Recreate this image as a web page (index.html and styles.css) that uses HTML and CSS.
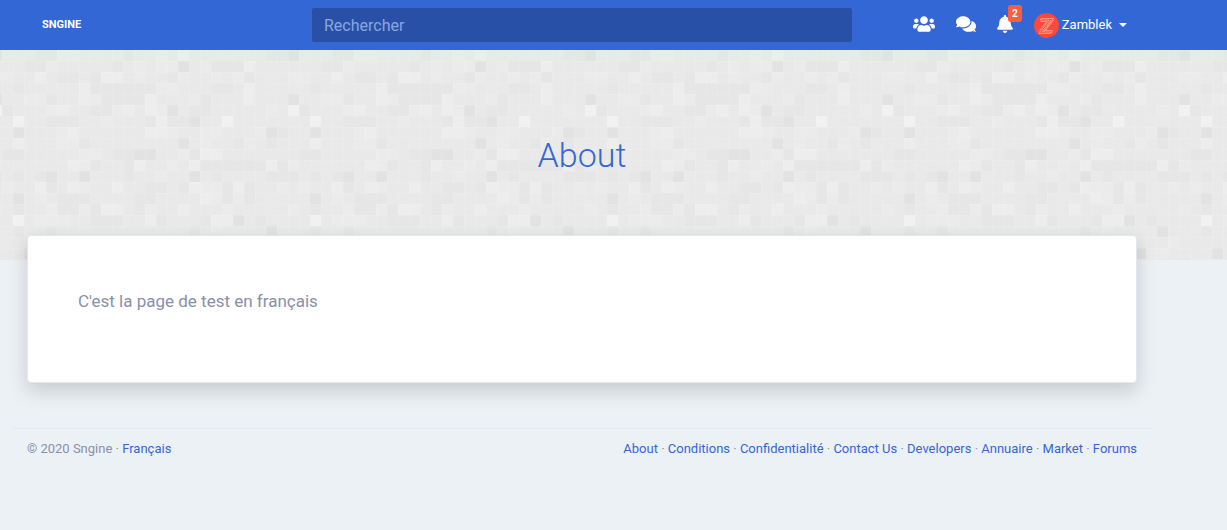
FILE: index.html
```
<!DOCTYPE html>
<html lang="fr">

<head>
    <meta charset="UTF-8" />
    <meta name="viewport" content="width=device-width, initial-scale=1.0" />
    <title>About | Sngine</title>
    <link rel="stylesheet" href="styles.css">
</head>

<body>
    <!-- Header -->
    <header class="main-header">
        <div class="container header-row">
            <div class="header-brand">
                <a class="logo" href="#">SNGINE</a>
            </div>
            <form class="header-search">
                <input type="text" placeholder="Rechercher" aria-label="Rechercher" />
            </form>
            <nav class="header-nav">
                <a class="nav-icon" href="#" aria-label="Friends">
                    <svg width="22" height="18" viewBox="0 0 640 512">
                        <path d="M96 224c35.3 0 64-28.7 64-64s-28.7-64-64-64-64 28.7-64 64 28.7 64 64 64zm448 0c35.3 0 64-28.7 64-64s-28.7-64-64-64-64 28.7-64 64 28.7 64 64 64zm32 32h-64c-17.6 0-33.5 7.1-45.1 18.6 40.3 22.1 68.9 62 75.1 109.4h66c17.7 0 32-14.3 32-32v-32c0-35.3-28.7-64-64-64zm-256 0c61.9 0 112-50.1 112-112S381.9 32 320 32 208 82.1 208 144s50.1 112 112 112zm76.8 32h-8.3c-20.8 10-43.9 16-68.5 16s-47.6-6-68.5-16h-8.3C179.6 288 128 339.6 128 403.2V432c0 26.5 21.5 48 48 48h288c26.5 0 48-21.5 48-48v-28.8c0-63.6-51.6-115.2-115.2-115.2zm-223.7-13.4C161.5 263.1 145.6 256 128 256H64c-35.3 0-64 28.7-64 64v32c0 17.7 14.3 32 32 32h65.9c6.3-47.4 34.9-87.3 75.2-109.4z" />
                    </svg>
                </a>
                <a class="nav-icon" href="#" aria-label="Messages">
                    <svg width="20" height="18" viewBox="0 0 576 512">
                        <path d="M416 192c0-88.4-93.1-160-208-160S0 103.6 0 192c0 34.3 14.1 65.9 38 92-13.4 30.2-35.5 54.2-35.8 54.5-2.2 2.3-2.8 5.7-1.5 8.7S4.8 352 8 352c36.6 0 66.9-12.3 88.7-25 32.2 15.7 70.3 25 111.3 25 114.9 0 208-71.6 208-160zm122 220c23.9-26 38-57.7 38-92 0-66.9-53.5-124.2-129.3-148.1.9 6.6 1.3 13.3 1.3 20.1 0 105.9-107.7 192-240 192-10.8 0-21.3-.8-31.7-1.9C207.8 439.6 281.8 480 368 480c41 0 79.1-9.2 111.3-25 21.8 12.7 52.1 25 88.7 25 3.2 0 6.1-1.9 7.3-4.8 1.3-2.9.7-6.3-1.5-8.7-.3-.3-22.4-24.2-35.8-54.5z" />
                    </svg>
                </a>
                <a class="nav-icon" href="#" aria-label="Notifications">
                    <svg width="16" height="18" viewBox="0 0 448 512">
                        <path d="M224 512c35.32 0 63.97-28.65 63.97-64H160.03c0 35.35 28.65 64 63.97 64zm215.39-149.71c-19.32-20.76-55.47-51.99-55.47-154.29 0-77.7-54.48-139.9-127.94-155.16V32c0-17.67-14.32-32-31.98-32s-31.98 14.33-31.98 32v20.84C118.56 68.1 64.08 130.3 64.08 208c0 102.3-36.15 133.53-55.47 154.29-6 6.45-8.66 14.16-8.61 21.71.11 16.4 12.98 32 32.1 32h383.8c19.12 0 32-15.6 32.1-32 .05-7.55-2.61-15.27-8.61-21.71z" />
                    </svg>
                    <span class="badge">2</span>
                </a>
                <button class="user-menu" type="button">
                    <svg class="avatar" width="25" height="25" viewBox="0 0 25 25">
                        <circle cx="12.5" cy="12.5" r="12.5" fill="#fb4a3b" />
                        <g fill="none" stroke="#ffb3a6" stroke-width=".7" stroke-linejoin="round">
                            <path d="M7 5.5h12.500L9.500 19H17l-.8 1.500H5L15 7H6.300z" />
                            <path d="M6.500 8.500h6L5 18.500M12 17.500h6.500L17 20.500M19.500 7L11 18M17 7L7.300 20" />
                        </g>
                    </svg>
                    <span>Zamblek</span>
                    <span class="caret"></span>
                </button>
            </nav>
        </div>
    </header>

    <!-- Page Header -->
    <section class="page-header">
        <svg class="page-pattern" aria-hidden="true">
            <defs>
                <!-- one unit = one 11px square, the tile is 27 squares wide -->
                <pattern id="squares" width="27" height="19" patternUnits="userSpaceOnUse" patternTransform="translate(2 0) scale(11)">
                    <rect width="27" height="19" fill="#eaeaea" />
                    <path stroke="#ececec" d="M5 .5h2M14 .5h1M4 1.500h1M12 1.500h1M14 1.500h2M18 1.500h1M0 2.500h1M12 2.500h1M16 2.500h1M19 2.500h1M21 2.500h1M26 2.500h1M14 3.500h2M2 4.500h2M8 4.500h1M17 4.500h1M4 5.500h1M10 5.500h1M14 5.500h1M24 5.500h1M9 6.500h1M5 7.500h1M15 7.500h1M18 7.500h2M23 7.500h1M5 8.500h2M18 8.500h1M22 8.500h1M7 9.500h2M16 9.500h1M7 10.500h1M15 10.500h1M26 10.500h1M14 11.500h1M0 12.500h1M7 12.500h1M18 12.500h2M25 12.500h1M3 13.500h1M19 13.500h1M21 13.500h1M4 14.500h1M7 14.500h1M13 14.500h1M20 14.500h1M26 14.500h1M3 15.500h3M19 16.500h1M25 17.500h1M23 18.500h2" />
                    <path stroke="#eeeeee" d="M16 .5h1M22 1.500h1M3 2.500h1M9 2.500h2M7 3.500h1M22 3.500h1M7 4.500h1M13 4.500h1M22 4.500h1M5 5.500h1M11 5.500h1M13 5.500h1M14 6.500h1M6 7.500h1M13 7.500h2M1 8.500h1M18 9.500h2M6 10.500h1M12 10.500h1M17 10.500h1M24 10.500h1M3 12.500h1M6 12.500h1M10 12.500h1M17 12.500h1M21 12.500h1M18 13.500h1M9 14.500h2M16 14.500h1M13 15.500h1M19 15.500h2" />
                    <path stroke="#f2f2f2" d="M26 5.500h1M1 6.500h1M20 6.500h1M1 15.500h1" />
                    <path stroke="#e7e7e7" d="M3 .5h2M11 .5h1M24 .5h2M2 1.500h2M10 1.500h1M19 1.500h3M5 2.500h2M8 2.500h1M15 2.500h1M22 2.500h1M1 3.500h1M8 3.500h6M19 3.500h2M4 4.500h1M9 4.500h4M18 4.500h1M0 5.500h1M8 5.500h2M17 5.500h2M4 6.500h3M13 6.500h1M15 6.500h2M25 7.500h1M7 8.500h1M21 8.500h1M24 8.500h1M0 9.500h2M10 9.500h2M17 9.500h1M8 10.500h1M11 10.500h1M18 10.500h6M25 10.500h1M1 11.500h1M3 11.500h1M11 11.500h1M19 11.500h1M24 11.500h3M4 12.500h1M13 12.500h2M16 12.500h1M20 12.500h1M22 12.500h1M5 13.500h3M12 13.500h2M20 13.500h1M22 13.500h1M1 14.500h1M5 14.500h2M8 14.500h1M12 14.500h1M8 15.500h3M14 15.500h1M18 15.500h1M23 15.500h1M1 16.500h1M4 16.500h1M17 16.500h1" />
                    <path stroke="#e3e3e3" d="M26 .5h1M16 1.500h1M26 4.500h1M15 5.500h1M17 6.500h1M1 7.500h1M24 7.500h1M16 8.500h1M12 9.500h2M4 11.500h1M7 11.500h1M17 11.500h1M1 13.500h1M21 15.500h1M24 16.500h1M2 18.500h1M22 18.500h1" />
                </pattern>
                <pattern id="edges" width="11" height="11" patternUnits="userSpaceOnUse" patternTransform="translate(2 0)">
                    <path d="M0 .5h11M.5 0v11" stroke="#ffffff" stroke-opacity=".1" />
                </pattern>
                <filter id="grain">
                    <feTurbulence type="fractalNoise" baseFrequency=".7" numOctaves="2" />
                    <feColorMatrix type="saturate" values="0" />
                </filter>
            </defs>
            <rect width="100%" height="100%" fill="url(#squares)" />
            <rect width="100%" height="100%" fill="url(#edges)" />
            <rect width="100%" height="100%" filter="url(#grain)" opacity=".03" />
        </svg>
        <div class="container">
            <h1>About</h1>
        </div>
    </section>

    <!-- Page Content -->
    <main class="container page-content">
        <div class="card">
            <p>C'est la page de test en français</p>
        </div>
    </main>

    <!-- Footer -->
    <footer class="container footer">
        <div>&copy; 2020 Sngine · <a href="#">Français</a></div>
        <div class="footer-links">
            <a href="#">About</a> · <a href="#">Conditions</a> · <a href="#">Confidentialité</a> · <a href="#">Contact Us</a> · <a href="#">Developers</a> · <a href="#">Annuaire</a> · <a href="#">Market</a> · <a href="#">Forums</a>
        </div>
    </footer>
</body>

</html>
```
FILE: styles.css
```
* {
    box-sizing: border-box;
}

body {
    margin: 0;
    font-family: Roboto, "Liberation Sans", sans-serif;
    font-size: 13px;
    line-height: 20px;
    color: #8a8fa8;
    background: #ecf1f6;
}

a {
    color: #3367d6;
    text-decoration: none;
}

.container {
    max-width: 1140px;
    margin: 0 12px;
    padding: 0 15px;
}

/* Header */
.main-header {
    background: #3367d6;
}

.header-row {
    display: grid;
    grid-template-columns: 1fr 2fr 1fr;
    align-items: center;
    height: 50px;
    padding: 0;
}

.header-brand {
    padding: 0 30px 2px;
}

.logo {
    color: #ffffff;
    font-size: 11px;
    font-weight: 700;
}

.header-search {
    padding: 0 15px;
}

.header-search input {
    display: block;
    width: 100%;
    height: 34px;
    padding: 0 12px;
    border: none;
    border-radius: 2px;
    background: #2850a7;
    color: #ffffff;
    font-family: inherit;
    font-size: 16px;
}

.header-search input::placeholder {
    color: #8ba6df;
}

.header-nav {
    display: flex;
    align-items: center;
    justify-content: flex-end;
    gap: 21px;
    padding-right: 25px;
}

.nav-icon {
    position: relative;
    display: flex;
    padding-bottom: 3px;
}

.nav-icon svg {
    fill: #ffffff;
}

.badge {
    position: absolute;
    top: -10px;
    right: -9px;
    padding: 0 4px;
    border-radius: 3px;
    background: #fc5d3c;
    color: #ffffff;
    font-size: 10px;
    font-weight: 700;
    line-height: 17px;
}

.user-menu {
    display: flex;
    align-items: center;
    gap: 3px;
    padding: 0;
    border: none;
    background: none;
    color: #ffffff;
    font-family: inherit;
    font-size: 13px;
    cursor: pointer;
}

.user-menu span {
    margin-bottom: 1px;
}

.user-menu .caret {
    margin: 0 0 0 4px;
    border: 4px solid transparent;
    border-top-color: #ffffff;
    border-bottom: none;
}

/* Page Header */
.page-header {
    position: relative;
    padding: 85px 0;
    text-align: center;
}

.page-pattern {
    position: absolute;
    top: 0;
    left: 0;
    width: 100%;
    height: 100%;
}

.page-header h1 {
    position: relative;
    margin: 0;
    color: #3367d6;
    font-size: 34px;
    font-weight: 300;
    line-height: 40px;
}

/* Page Content */
.page-content {
    position: relative;
    margin-top: -25px;
}

.card {
    min-height: 148px;
    padding: 50px;
    border: 1px solid #e2e8f2;
    border-radius: 4px;
    background: #ffffff;
    box-shadow: 0 8px 20px rgba(0, 0, 0, 0.16);
}

.card p {
    margin: 0;
    font-size: 17px;
    line-height: 30px;
}

/* Footer */
.footer {
    display: flex;
    flex-wrap: wrap;
    justify-content: space-between;
    margin-top: 45px;
    padding-top: 10px;
    padding-bottom: 20px;
    border-top: 1px solid #e4e9f5;
}
```
